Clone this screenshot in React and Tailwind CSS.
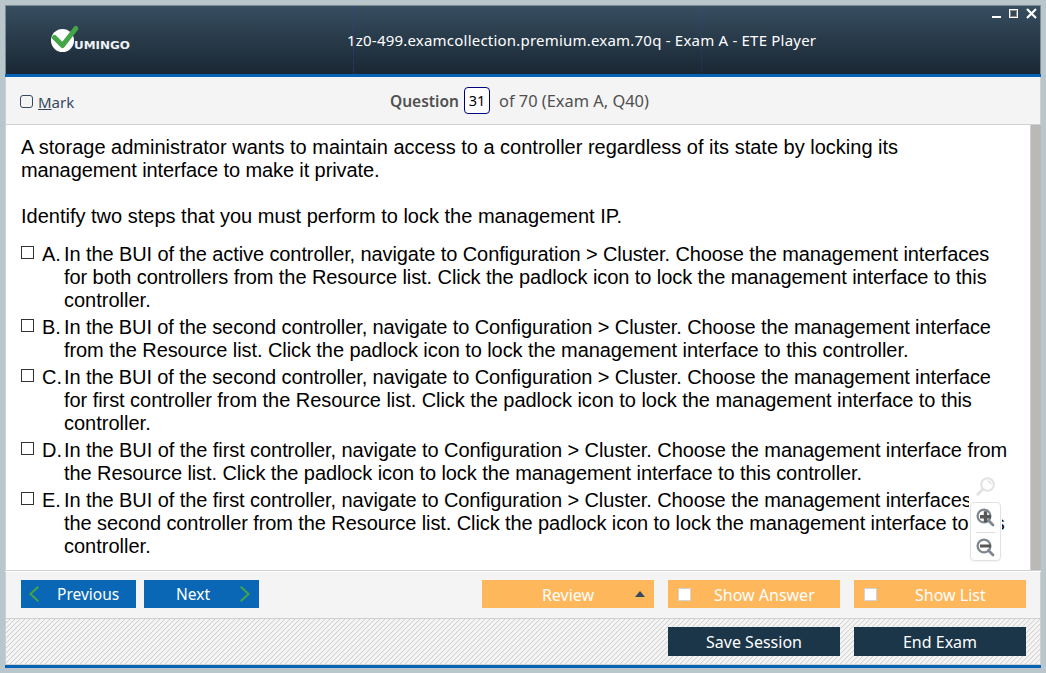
import React from "react";

const answers = [
  ["A.", [["In the BUI of the active controller, navigate to Configuration > Cluster. Choose the management interfaces", "tracking-[-0.098px]"], ["for both controllers from the Resource list. Click the padlock icon to lock the management interface to this", "tracking-[-0.073px]"], ["controller.", ""]]],
  ["B.", [["In the BUI of the second controller, navigate to Configuration > Cluster. Choose the management interface", "tracking-[-0.104px]"], ["from the Resource list. Click the padlock icon to lock the management interface to this controller.", "tracking-[-0.072px]"]]],
  ["C.", [["In the BUI of the second controller, navigate to Configuration > Cluster. Choose the management interface", "tracking-[-0.104px]"], ["for first controller from the Resource list. Click the padlock icon to lock the management interface to this", "tracking-[-0.055px]"], ["controller.", ""]]],
  ["D.", [["In the BUI of the first controller, navigate to Configuration > Cluster. Choose the management interface from", "tracking-[-0.073px]"], ["the Resource list. Click the padlock icon to lock the management interface to this controller.", "tracking-[-0.085px]"]]],
  ["E.", [["In the BUI of the first controller, navigate to Configuration > Cluster. Choose the management interfaces for", "tracking-[-0.075px]"], ["the second controller from the Resource list. Click the padlock icon to lock the management interface to this", "tracking-[-0.09px]"], ["controller.", ""]]],
];

function Logo() {
  return (
    <svg className="h-[30px] w-[82px]" viewBox="0 0 82 30">
      <circle cx="11.5" cy="16.5" r="11.5" fill="#fff" />
      <path d="M3.5 13.5 L11.5 21.5 L24.8 4.5" fill="none" stroke="#43a545" strokeWidth="5" strokeLinecap="round" strokeLinejoin="round" />
      <text x="23" y="25" fill="#eef2f5" fontFamily="DejaVu Sans" fontWeight="bold" fontSize="9.6" textLength="56" lengthAdjust="spacingAndGlyphs">UMINGO</text>
    </svg>
  );
}

function Magnifier({ plus }) {
  return (
    <svg className="size-[19px]" viewBox="0 0 19 19" fill="none">
      <path d="M12.5 12.5 L17 17" stroke="#7d8790" strokeWidth="2.8" strokeLinecap="round" />
      <circle cx="8" cy="8" r="6.4" stroke="#7d8790" strokeWidth="2.3" />
      {plus ? <path d="M4 8.8 H15 M9.5 3.3 V14.3" stroke="#575757" strokeWidth="3.4" /> : <path d="M4 8 H15" stroke="#575757" strokeWidth="3" />}
    </svg>
  );
}

function Arrow({ left }) {
  return (
    <svg className="h-4 w-[10px]" viewBox="0 0 10 16" fill="none" stroke="#43a545" strokeWidth="2">
      <path d={left ? "M9.3 0.7 L1.4 8 L9.3 15.3" : "M0.7 0.7 L8.6 8 L0.7 15.3"} />
    </svg>
  );
}

export default function App() {
  return (
    <div className="h-[673px] w-[1046px] overflow-hidden bg-[#b9c6cc] p-[5px] font-['Noto_Sans',sans-serif]">
      <div className="flex h-[663px] w-[1036px] flex-col">
        <header className="relative flex h-[69px] shrink-0 border border-b-0 border-[#7c8b90] bg-linear-to-b from-[#374e61] to-[#1a2733] pl-[45px] pt-[18px]">
          <span className="absolute left-[347px] top-0 h-[68px] border-l border-dotted border-[#34409a]/80" />
          <span className="absolute left-[695px] top-0 h-[68px] border-l border-dotted border-[#34409a]/40" />
          <Logo />
          <div className="ml-[214px] mt-1 w-[469px] whitespace-nowrap text-[15px] leading-6 tracking-[0.21px] text-white">1z0-499.examcollection.premium.exam.70q - Exam A - ETE Player</div>
          <svg className="absolute -right-px top-0 h-5 w-[50px]" viewBox="0 0 50 20" fill="none" stroke="#fff">
            <path d="M1 11 H10" strokeWidth="2" />
            <rect x="18.5" y="3.5" width="8" height="8" />
            <rect x="19.5" y="4.5" width="6" height="6" stroke="#8c8c86" />
            <path d="M36 3 L45 12 M45 3 L36 12" strokeWidth="2.2" />
          </svg>
        </header>
        <div className="h-[3px] shrink-0 bg-[#0562b5]" />
        <div className="flex h-12 shrink-0 items-center border-x border-b border-[#d0d0d0] bg-[#f4f4f4] text-[#505050]">
          <span className="ml-3.5 mt-0.5 size-[13px] rounded-[3px] border border-[#34495e]" />
          <span className="ml-[5px] mt-1 w-[352px] text-[15px] text-[#34495e]"><u>M</u>ark</span>
          <b className="mt-0.5 w-[74px] text-[15.5px] font-semibold">Question</b>
          <span className="flex h-[27px] w-[26px] items-center justify-center rounded border border-[#000080] bg-white pt-px text-[14.5px] text-black">31</span>
          <span className="ml-[9px] mt-0.5 whitespace-nowrap text-[16.4px]">of 70 (Exam A, Q40)</span>
        </div>
        <main className="relative flex h-[446px] shrink-0 overflow-hidden border-b border-l border-[#d0d0d0] bg-white font-['Liberation_Sans',Arial,sans-serif] text-[20px] leading-[23px] text-black">
          <div className="w-[1024px] whitespace-nowrap pl-[15px] pt-[11px]">
            <p>A storage administrator wants to maintain access to a controller regardless of its state by locking its</p>
            <p className="tracking-[-0.1px]">management interface to make it private.</p>
            <p className="mt-[23px]">Identify two steps that you must perform to lock the management IP.</p>
            <div className="mt-[15px] flex flex-col gap-1">
              {answers.map(([k, lines]) => (
                <div key={k} className="flex">
                  <span className="mt-[3px] size-[13px] border border-[#333]" />
                  <span className="ml-2 w-[22px]">{k}</span>
                  <div>{lines.map(([text, spacing]) => <p key={text} className={spacing}>{text}</p>)}</div>
                </div>
              ))}
            </div>
          </div>
          <div className="ml-auto w-[11px] border-l border-[#d0d0d0] bg-[#bbb9b5]" />
          <div className="absolute left-[963px] top-[349px] flex h-[90px] w-[33px] flex-col items-center bg-white pt-[3px]">
            <svg className="size-[19px] shrink-0" viewBox="0 0 19 19" fill="none" stroke="#e2e2e2">
              <circle cx="11.5" cy="7.5" r="6.3" strokeWidth="2" />
              <path d="M11.5 4 A3.5 3.5 0 0 1 15 7.5" strokeWidth="1.5" />
              <path d="M7 12 L1.8 17.2" strokeWidth="3" strokeLinecap="round" />
            </svg>
            <div className="mt-1.5 flex h-[59px] w-[31px] shrink-0 flex-col items-center justify-between rounded border border-[#e2e2e2] pb-[3px] pt-[5px] shadow-xs">
              <Magnifier plus />
              <span className="h-px w-[19px] bg-[#dedede]" />
              <Magnifier />
            </div>
          </div>
        </main>
        <div className="h-px shrink-0 bg-white" />
        <div className="flex h-[47px] shrink-0 items-start border-x border-b border-[#cfcfcf] bg-[#f4f4f4] pl-[15px] pt-2 text-[16px] text-white">
          <button className="flex h-7 w-[115px] items-center bg-[#0a67b5] pl-2 text-[15.5px]">
            <Arrow left /><span className="ml-[18px] mt-0.5">Previous</span>
          </button>
          <button className="ml-2 flex h-7 w-[115px] items-center bg-[#0a67b5] pl-8 text-[15.5px]">
            <span className="mt-0.5 w-16 text-left">Next</span><Arrow />
          </button>
          <button className="relative ml-[223px] h-7 w-[172px] bg-[#ffb75c] pt-0.5">
            Review
            <svg className="absolute right-[9px] top-[11px] h-[6px] w-[10px]" viewBox="0 0 10 6"><path d="M0 6 L5 0 L10 6Z" fill="#34495e" /></svg>
          </button>
          <button className="ml-3.5 flex h-7 w-[172px] items-center bg-[#ffb75c] pl-2.5">
            <span className="size-[13px] border border-[#d3d3d3] bg-white" /><span className="ml-[23px] mt-0.5 whitespace-nowrap">Show Answer</span>
          </button>
          <button className="ml-3.5 flex h-7 w-[172px] items-center bg-[#ffb75c] pl-2.5">
            <span className="size-[13px] border border-[#d3d3d3] bg-white" /><span className="ml-[38px] mt-0.5 whitespace-nowrap">Show List</span>
          </button>
        </div>
        <div className="flex h-[46px] shrink-0 justify-end gap-3.5 border-x border-b border-[#cfcfcf] bg-[#f4f4f4] bg-[repeating-linear-gradient(135deg,#f4f4f4_0,#f4f4f4_2.3px,#c6c6c6_2.9px,#f4f4f4_3.536px)] pr-3.5 pt-2 text-[16px] text-white">
          <button className="h-[29px] w-[172px] bg-[#1b3549]">Save Session</button>
          <button className="h-[29px] w-[172px] bg-[#1b3549]">End Exam</button>
        </div>
        <div className="h-[3px] shrink-0 bg-[#0562b5]" />
      </div>
    </div>
  );
}
